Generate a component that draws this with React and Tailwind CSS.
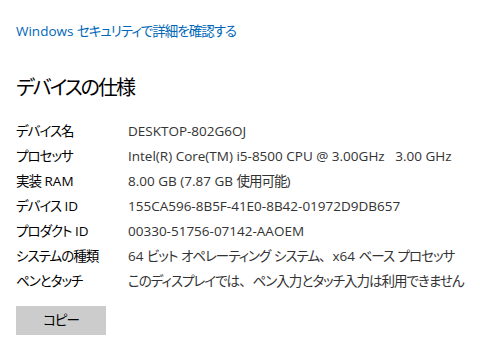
import React from 'react';

const specs = [
    { label: 'デバイス名', value: 'DESKTOP-802G6OJ' },
    { label: 'プロセッサ', value: 'Intel(R) Core(TM) i5-8500 CPU @ 3.00GHz\u00a0\u00a0\u00a03.00 GHz' },
    { label: '実装 RAM', value: '8.00 GB (7.87 GB 使用可能)' },
    { label: 'デバイス ID', value: '155CA596-8B5F-41E0-8B42-01972D9DB657' },
    { label: 'プロダクト ID', value: '00330-51756-07142-AAOEM' },
    { label: 'システムの種類', value: '64 ビット オペレーティング システム、x64 ベース プロセッサ' },
    { label: 'ペンとタッチ', value: 'このディスプレイでは、ペン入力とタッチ入力は利用できません' },
];

// Japanese runs are set a bit tighter, like Yu Gothic UI; the comma keeps its full width
const Jp = ({ text }) => {
    const parts = text.split(/(、|[\u3000-\u3000\u3002-\u30ff\u4e00-\u9fff]+)/);
    return parts.map((part, i) => {
        if (part === '、') return <span key={i} className="[font-feature-settings:normal]">{part}</span>;
        if (i % 2 === 1) return <span key={i} className="tracking-[-1px]">{part}</span>;
        return <React.Fragment key={i}>{part}</React.Fragment>;
    });
};

const App = () => {
    return (
        <div className="w-[480px] h-[358px] bg-white overflow-hidden px-4 font-['Open_Sans','Noto_Sans_CJK_JP',sans-serif] [font-feature-settings:'palt']">
            <div className="pt-[21px] text-[13.5px] leading-[20px] text-[#0067b8]"><Jp text="Windows セキュリティで詳細を確認する" /></div>
            <h1 className="mt-[33px] text-[20px] leading-[28px] text-black tracking-[-2px]">デバイスの仕様</h1>
            <div className="mt-[17px] text-[13.5px] leading-[25px]">
                {specs.map(spec => (
                    <div key={spec.label} className="flex whitespace-nowrap">
                        <div className="w-[112px] shrink-0 text-black"><Jp text={spec.label} /></div>
                        <div className="text-[#333]"><Jp text={spec.value} /></div>
                    </div>
                ))}
            </div>
            <button className="mt-[12px] w-[90px] h-[29px] bg-[#cccccc] text-[13.5px] text-black"><Jp text="コピー" /></button>
        </div>
    );
};

export default App;
